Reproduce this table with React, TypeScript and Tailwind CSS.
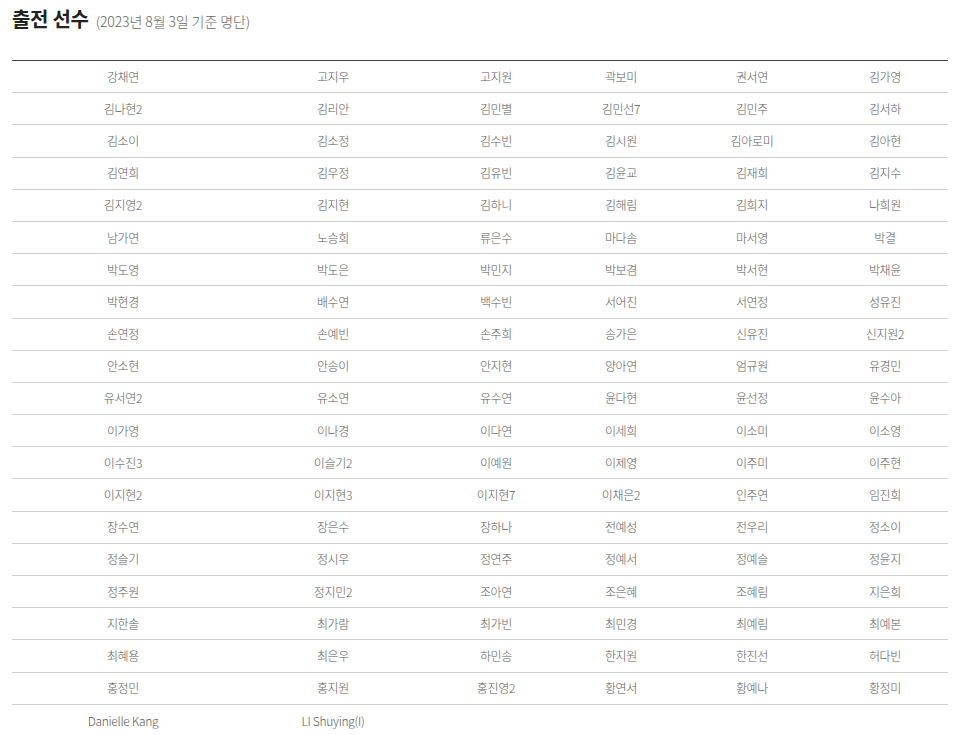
import React from "react";

const names: string[] = [
  "강채연","고지우","고지원","곽보미","권서연","김가영",
  "김나현2","김리안","김민별","김민선7","김민주","김서하",
  "김소이","김소정","김수빈","김시원","김아로미","김아현",
  "김연희","김우정","김유빈","김윤교","김재희","김지수",
  "김지영2","김지현","김하니","김해림","김희지","나희원",
  "남가연","노승희","류은수","마다솜","마서영","박결",
  "박도영","박도은","박민지","박보겸","박서현","박채윤",
  "박현경","배수연","백수빈","서어진","서연정","성유진",
  "손연정","손예빈","손주희","송가은","신유진","신지원2",
  "안소현","안송이","안지현","양아연","엄규원","유경민",
  "유서연2","유소연","유수연","윤다현","윤선정","윤수아",
  "이가영","이나경","이다연","이세희","이소미","이소영",
  "이수진3","이슬기2","이예원","이제영","이주미","이주현",
  "이지현2","이지현3","이지현7","이채은2","인주연","임진희",
  "장수연","장은수","장하나","전예성","전우리","정소이",
  "정슬기","정시우","정연주","정예서","정예슬","정윤지",
  "정주원","정지민2","조아연","조은혜","조혜림","지은희",
  "지한솔","최가람","최가빈","최민경","최예림","최예본",
  "최혜용","최은우","하민송","한지원","한진선","허다빈",
  "홍정민","홍지원","홍진영2","황연서","황예나","황정미",
];

const rows: string[][] = [];
for (let i = 0; i < names.length; i += 6) rows.push(names.slice(i, i + 6));
rows.push(["Danielle Kang", "LI Shuying(I)", "", "", "", ""]);

export default function App() {
  return (
    <div
      className="w-[962px] h-[735px] bg-white px-[12px] pt-[4px]"
      style={{ fontFamily: '"Noto Sans CJK KR", "Noto Sans", sans-serif' }}
    >
      <div className="flex items-baseline h-[30px]">
        <span className="text-[20px] font-bold text-[#222] tracking-[-0.3px]">출전 선수</span>
        <span className="ml-[7px] text-[14px] font-light text-[#666] tracking-[-0.1px]">(2023년 8월 3일 기준 명단)</span>
      </div>
      <div className="mt-[26px] w-[936px] border-t border-[#4b3a57]">
        {rows.map((r, ri) => (
          <div
            key={ri}
            className={
              "grid grid-cols-[222px_198px_128px_122px_140px_126px] h-[32.2px] items-center text-[12px] font-light text-[#5a5a5a] tracking-[-0.3px] " +
              (ri < rows.length - 1 ? "border-b border-[#cfcfcf]" : "")
            }
          >
            {r.map((n, ci) => (
              <div key={ci} className="text-center whitespace-nowrap">
                {n}
              </div>
            ))}
          </div>
        ))}
      </div>
    </div>
  );
}
